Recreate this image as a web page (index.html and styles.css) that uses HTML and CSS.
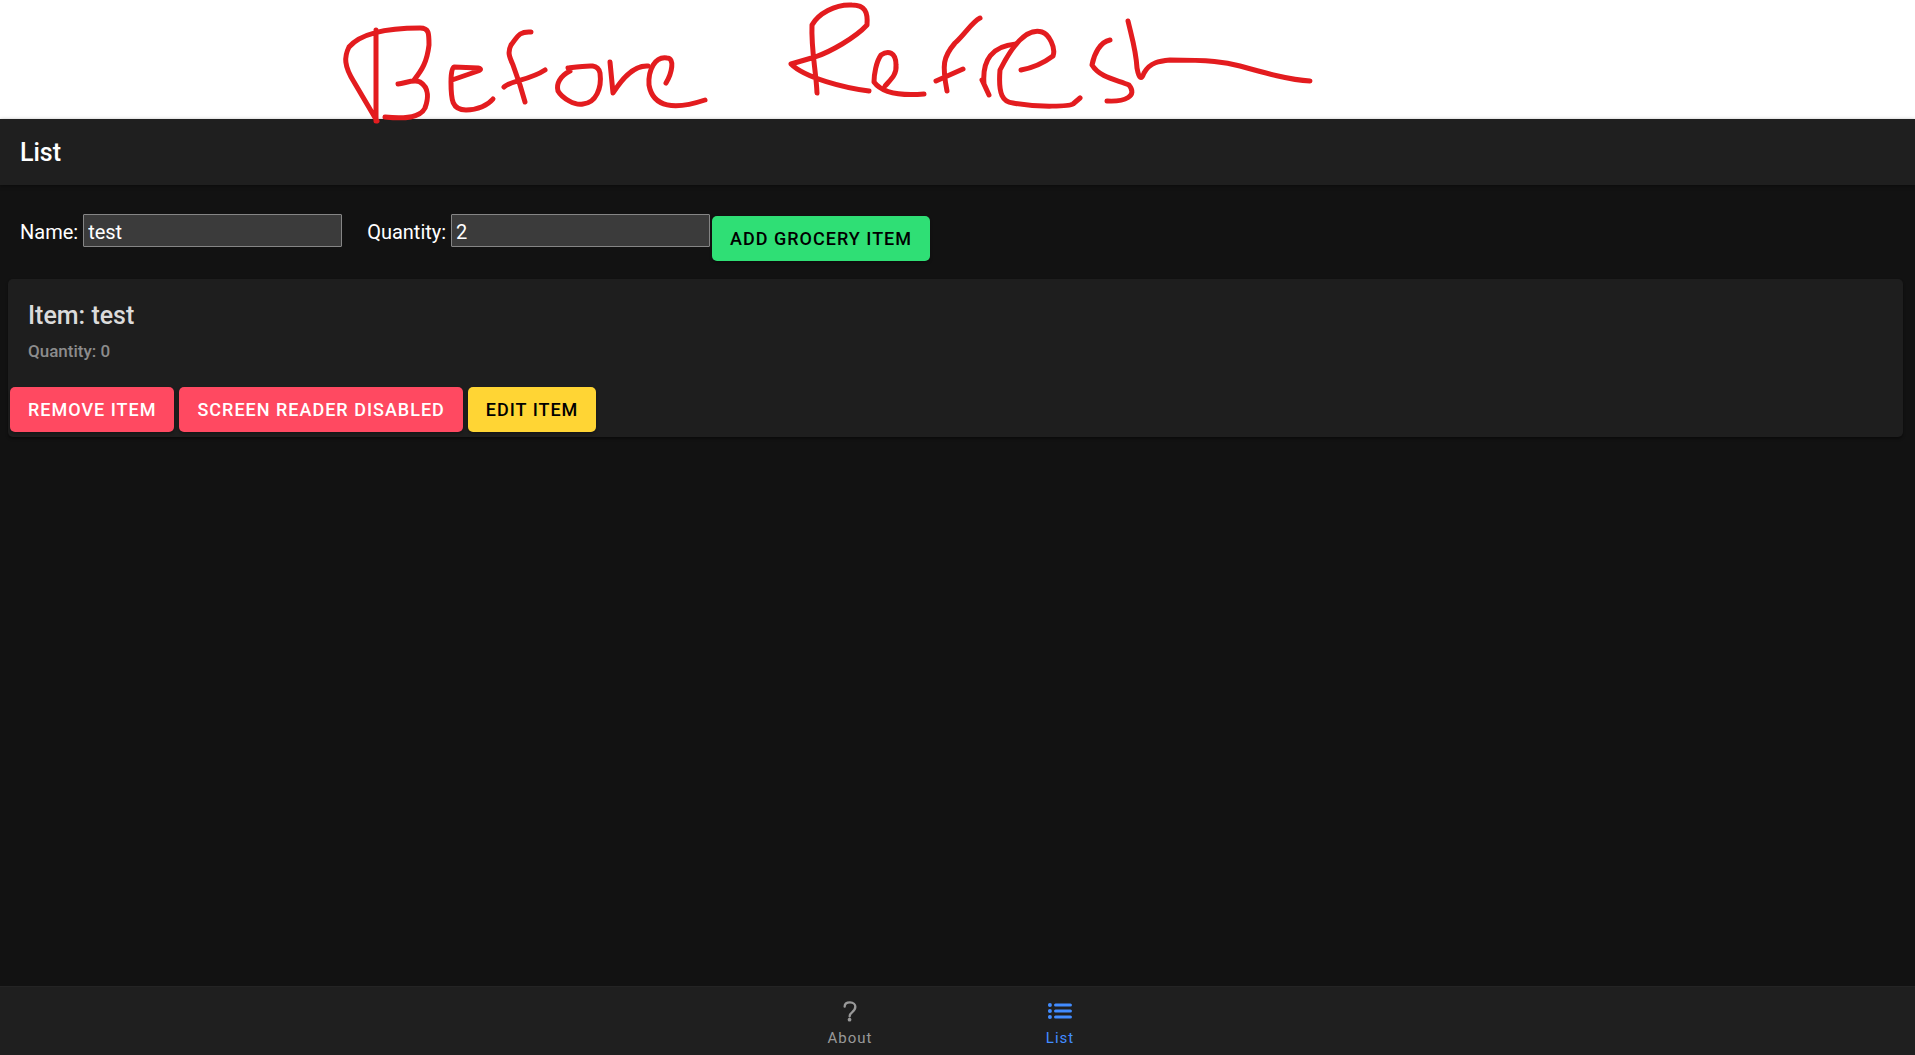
FILE: index.html
```html
<!DOCTYPE html>
<html lang="en">
<head>
<meta charset="utf-8">
<title>List</title>
<link rel="stylesheet" href="styles.css">
</head>
<body>
<div class="note">
  <svg class="ink" width="1000" height="130" viewBox="0 0 1000 130" role="img" aria-label="Before Refresh">
    <path d="M46 30V121M47 121L24 82C14 66 14 57 19 47C32 32 60 28 90 28C99 28 99 33 99 45C97 62 92 70 84 80M68 84C76 83 84 79 90 82C100 88 98 100 95 108C90 118 75 119 55 117"/>
    <path d="M122 80L148 71Q153 69 148 68L124 67Q121 68 121 82C121 100 122 110 136 110C148 110 158 105 163 99"/>
    <path d="M201 32C188 31 187 38 181 45C177 53 180 58 183 65L190 85L195 102M174 87C180 81 200 80 215 70"/>
    <path d="M240 71C230 76 226 84 228 91C232 98 245 106 253 104C266 103 272 88 270 73C268 64 262 65 238 68"/>
    <path d="M280 62L283 93C290 82 302 65 318 66"/>
    <path d="M336 83C342 73 345 58 337 58C325 56 318 70 319 85C323 108 345 110 375 100"/>
    <g transform="translate(440 0)">
      <path d="M47 93C46 70 41 50 42 25C48 14 65 4 82 5C95 5 98 12 97 25C85 38 60 52 45 57L21 64C35 78 75 88 99 91"/>
      <path d="M115 86C120 80 127 75 126 65C126 52 118 50 111 55C106 62 104 75 104 82C112 93 130 96 154 94"/>
      <path d="M210 18C202 22 195 34 185 43C173 57 172 65 177 91M166 81L193 69"/>
      <path d="M212 80L219 95L214 84C212 60 222 46 246 44"/>
      <path d="M251 70C262 68 275 62 283 56C286 48 279 34 272 32C255 27 240 50 230 70C228 95 233 102 243 103C270 108 300 106 303 104L310 98"/>
    </g>
    <g transform="translate(720 0)">
      <path d="M60 40C50 42 44 54 42 65C50 78 68 80 79 85C88 96 75 102 57 101"/>
      <path d="M78 21C82 38 86 50 87 68Q90 84 94 73C100 62 110 61 120 60C160 60 175 62 190 66C215 73 240 80 260 81"/>
    </g>
  </svg>
</div>
<div class="app">
  <header class="toolbar"><h1 class="toolbar-title">List</h1></header>
  <main class="content">
    <form class="entry">
      <div class="field"><label for="name">Name:</label><input class="text-box" id="name" type="text" value="test"></div>
      <div class="field"><label for="quantity">Quantity:</label><input class="text-box" id="quantity" type="text" value="2"></div>
      <button class="button button-success" type="button">Add Grocery Item</button>
    </form>
    <section class="card">
      <div class="card-header">
        <h2 class="card-title">Item: test</h2>
        <p class="card-subtitle">Quantity: 0</p>
      </div>
      <div class="card-actions">
        <button class="button button-danger" type="button">Remove Item</button>
        <button class="button button-danger" type="button">Screen Reader Disabled</button>
        <button class="button button-warning" type="button">Edit Item</button>
      </div>
    </section>
  </main>
  <nav class="tabs">
    <a class="tab" href="#about">
      <svg class="tab-icon" viewBox="0 0 512 512" fill="none" stroke="currentColor" stroke-width="40" stroke-linecap="round" stroke-linejoin="round"><path d="M165 180C165 140 195 110 256 110C315 110 347 145 347 184C347 235 320 255 290 280C262 302 250 318 250 346"/><circle cx="248" cy="405" r="32" fill="currentColor" stroke="none"/></svg>
      <span>About</span>
    </a>
    <a class="tab tab-selected" href="#list">
      <svg class="tab-icon" viewBox="0 0 512 512" fill="none" stroke="currentColor" stroke-width="52" stroke-linecap="round"><path d="M180 154H434M180 256H434M180 358H434"/><g fill="currentColor" stroke="none"><circle cx="84" cy="154" r="34"/><circle cx="84" cy="256" r="34"/><circle cx="84" cy="358" r="34"/></g></svg>
      <span>List</span>
    </a>
  </nav>
</div>
</body>
</html>
```
FILE: styles.css
```css
* {
  box-sizing: border-box;
}

body {
  margin: 0;
  min-height: 100vh;
  display: flex;
  flex-direction: column;
  background: #121212;
  color: #fff;
  font-family: Roboto, "Liberation Sans", sans-serif;
  font-size: 20px;
}

h1, h2, p {
  margin: 0;
}

.note {
  height: 119px;
  padding-left: 330px;
  background: #fff;
}

.ink {
  display: block;
  position: relative;
  z-index: 1;
  fill: none;
  stroke: #e31c1f;
  stroke-width: 5;
  stroke-linecap: round;
  stroke-linejoin: round;
}

.app {
  flex: 1;
  display: flex;
  flex-direction: column;
}

.toolbar {
  height: 66px;
  padding: 0 20px;
  display: flex;
  align-items: center;
  background: #1f1f1f;
  box-shadow: 0 1px 4px rgba(0, 0, 0, 0.4);
}

.toolbar-title {
  font-size: 25px;
  font-weight: 500;
}

.content {
  flex: 1;
}

.entry {
  display: flex;
  align-items: flex-start;
  padding: 29px 20px 16px;
}

.field {
  display: flex;
  align-items: baseline;
  gap: 5px;
}

.field + .field {
  margin-left: 25px;
}

.text-box {
  width: 259px;
  height: 33px;
  padding: 2px 4px 0;
  border: 1px solid #858585;
  border-radius: 1px;
  background: #3b3b3b;
  color: #fff;
  font: inherit;
}

.button {
  height: 45px;
  padding: 0 18px;
  border: 0;
  border-radius: 5px;
  box-shadow: 0 2px 3px rgba(0, 0, 0, 0.3);
  font-family: inherit;
  font-size: 18px;
  font-weight: 500;
  letter-spacing: 1px;
  text-transform: uppercase;
  white-space: nowrap;
}

.entry .button {
  margin: 2px;
}

.button-success {
  background: #2fdf75;
  color: #000;
}

.button-danger {
  background: #ff4961;
  color: #fff;
}

.button-warning {
  background: #ffd534;
  color: #000;
}

.card {
  margin: 0 12px 0 8px;
  border-radius: 5px;
  background: #1e1e1e;
  box-shadow: 0 2px 3px rgba(0, 0, 0, 0.4);
}

.card-header {
  padding: 22px 20px 20px;
}

.card-title {
  color: #dbdbdb;
  font-size: 25px;
  line-height: 30px;
  font-weight: 500;
}

.card-subtitle {
  margin-top: 8px;
  color: #8c8c8c;
  font-size: 17px;
  line-height: 24px;
  font-weight: 500;
}

.card-actions {
  display: flex;
  gap: 5px;
  padding: 4px 2px 5px;
}

.tabs {
  display: flex;
  justify-content: center;
  padding-right: 5px;
  background: #1f1f1f;
  border-top: 1px solid #242424;
}

.tab {
  width: 210px;
  height: 68px;
  display: flex;
  flex-direction: column;
  align-items: center;
  justify-content: center;
  gap: 3px;
  color: #999;
  font-size: 15px;
  line-height: 18px;
  letter-spacing: 1px;
  text-decoration: none;
}

.tab-selected {
  color: #428cff;
}

.tab-icon {
  width: 30px;
  height: 30px;
}
```
